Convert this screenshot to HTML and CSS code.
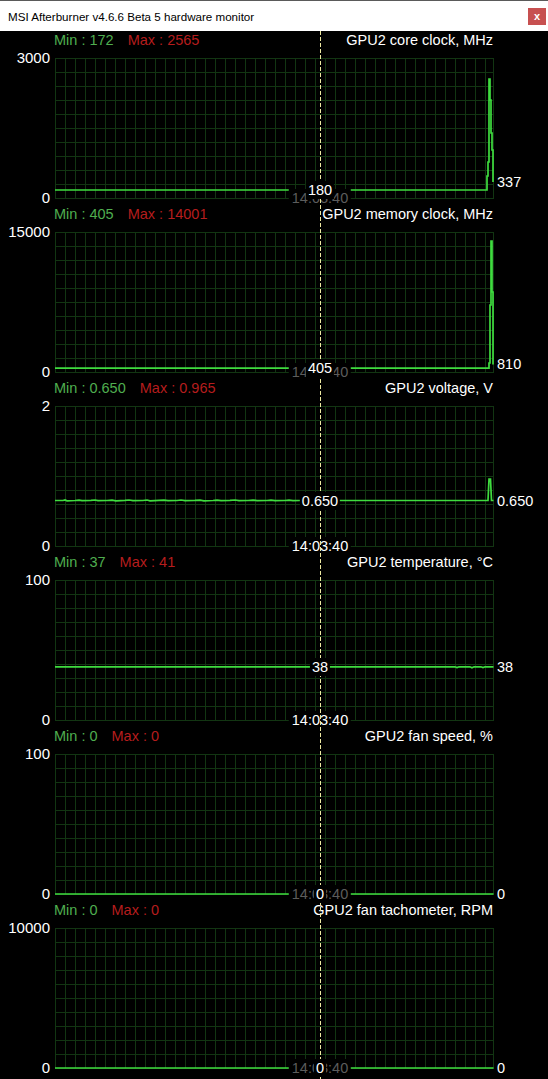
FILE: index.html
```html
<!DOCTYPE html>
<html>
<head>
<meta charset="utf-8">
<title>MSI Afterburner hardware monitor</title>
<link rel="stylesheet" href="styles.css">
</head>
<body>
<div class="window">
  <div class="titlebar">
    <span class="title">MSI Afterburner v4.6.6 Beta 5 hardware monitor</span>
    <span class="close">x</span>
  </div>
  <div class="monitor">
    <div class="cursor"></div>

    <section class="chart">
      <div class="head"><span class="min">Min : 172</span><span class="max">Max : 2565</span><span class="name">GPU2 core clock, MHz</span></div>
      <div class="body">
        <div class="axis"><span>3000</span><span>0</span></div>
        <div class="plot">
          <svg class="data" width="439" height="141" viewBox="0 0 439 141"><path d="M0,132 H432 V118 H433 V104 H434 V21 H435 V42 H436 V75 H437 V92 H438 V124"/></svg>
          <span class="time dim">14:03:40</span>
          <span class="val" style="top:122.6px">180</span>
          <span class="cur" style="top:115.3px">337</span>
        </div>
      </div>
    </section>

    <section class="chart">
      <div class="head"><span class="min">Min : 405</span><span class="max">Max : 14001</span><span class="name">GPU2 memory clock, MHz</span></div>
      <div class="body">
        <div class="axis"><span>15000</span><span>0</span></div>
        <div class="plot">
          <svg class="data" width="439" height="141" viewBox="0 0 439 141"><path d="M0,136.2 H434 V131 H435 V73 H436 V9 H437 V60 H438 V132.4"/></svg>
          <span class="time dim">14:03:40</span>
          <span class="val" style="top:127.2px">405</span>
          <span class="cur" style="top:123.4px">810</span>
        </div>
      </div>
    </section>

    <section class="chart">
      <div class="head"><span class="min">Min : 0.650</span><span class="max">Max : 0.965</span><span class="name">GPU2 voltage, V</span></div>
      <div class="body">
        <div class="axis"><span>2</span><span>0</span></div>
        <div class="plot">
          <svg class="data" width="439" height="141" viewBox="0 0 439 141"><path d="M0,94.5 L8,94.5 L10,94 L12,94.8 L20,94.5 L24,94.1 L27,94.6 L36,94.4 L40,94 L43,94.7 L52,94.5 L57,94.1 L61,94.8 L70,94.4 L74,94 L78,94.6 L88,94.5 L92,94 L95,94.8 L104,94.4 L109,94.1 L113,94.7 L122,94.5 L126,94 L130,94.6 L140,94.4 L145,94.1 L149,94.8 L158,94.5 L162,94.1 L166,94.6 L175,94.4 L180,94 L184,94.7 L193,94.5 L198,94.1 L202,94.6 L212,94.5 L216,94.1 L220,94.7 L230,94.5 L234,94.2 L238,94.6 L245,94.5 H433 L434,73 H435.5 L436.5,94.5 H438.5"/></svg>
          <span class="time">14:03:40</span>
          <span class="val" style="top:85.5px">0.650</span>
          <span class="cur" style="top:85.5px">0.650</span>
        </div>
      </div>
    </section>

    <section class="chart">
      <div class="head"><span class="min">Min : 37</span><span class="max">Max : 41</span><span class="name">GPU2 temperature, °C</span></div>
      <div class="body">
        <div class="axis"><span>100</span><span>0</span></div>
        <div class="plot">
          <svg class="data" width="439" height="141" viewBox="0 0 439 141"><path d="M0,86.8 H400 L402,87.6 L404,86.8 H415 L417,87.8 L419,86.8 H426 L428,87.5 L430,86.8 H438.5"/></svg>
          <span class="time">14:03:40</span>
          <span class="val" style="top:77.8px">38</span>
          <span class="cur" style="top:77.8px">38</span>
        </div>
      </div>
    </section>

    <section class="chart">
      <div class="head"><span class="min">Min : 0</span><span class="max">Max : 0</span><span class="name">GPU2 fan speed, %</span></div>
      <div class="body">
        <div class="axis"><span>100</span><span>0</span></div>
        <div class="plot">
          <svg class="data" width="439" height="141" viewBox="0 0 439 141"><path d="M0,140 H438.5"/></svg>
          <span class="time dim">14:03:40</span>
          <span class="val" style="top:131px">0</span>
          <span class="cur" style="top:131px">0</span>
        </div>
      </div>
    </section>

    <section class="chart">
      <div class="head"><span class="min">Min : 0</span><span class="max">Max : 0</span><span class="name">GPU2 fan tachometer, RPM</span></div>
      <div class="body">
        <div class="axis"><span>10000</span><span>0</span></div>
        <div class="plot">
          <svg class="data" width="439" height="141" viewBox="0 0 439 141"><path d="M0,140 H438.5"/></svg>
          <span class="time dim">14:03:40</span>
          <span class="val" style="top:131px">0</span>
          <span class="cur" style="top:131px">0</span>
        </div>
      </div>
    </section>
  </div>
</div>
</body>
</html>
```
FILE: styles.css
```css
* { box-sizing: border-box; }
html, body {
  margin: 0;
  padding: 0;
  background: #000;
}
body {
  font-family: "Liberation Sans", Arial, sans-serif;
  color: #fff;
  width: 548px;
  height: 1079px;
  overflow: hidden;
}
.titlebar {
  height: 31px;
  background: #fff;
  border-top: 1px solid #5a5a5a;
  display: flex;
  align-items: center;
  justify-content: space-between;
  padding: 0 2px 0 8px;
}
.title {
  font-size: 11.6px;
  color: #000;
}
.close {
  width: 18px;
  height: 17px;
  background: #c75050;
  color: #fff;
  font-size: 11px;
  font-weight: bold;
  line-height: 16px;
  text-align: center;
}
.monitor {
  position: relative;
}
.cursor {
  position: absolute;
  top: 0;
  bottom: -10px;
  left: 320px;
  width: 1px;
  background: repeating-linear-gradient(to bottom, #ece8a0 0 4px, transparent 4px 6px);
  z-index: 1;
}
.chart {
  height: 174px;
  display: flex;
  flex-direction: column;
}
.head {
  display: flex;
  height: 18px;
  line-height: 18px;
  font-size: 14.5px;
  padding: 0 55px 0 54px;
  white-space: nowrap;
}
.min { color: #4fae4f; }
.max { color: #b51d1d; margin-left: 14px; }
.name { margin-left: auto; color: #fff; }
.body {
  display: flex;
  margin-top: 9px;
  height: 141px;
}
.axis {
  width: 55px;
  padding-right: 5px;
  display: flex;
  flex-direction: column;
  justify-content: space-between;
  align-items: flex-end;
  font-size: 15px;
  line-height: 18px;
}
.axis span:first-child { margin-top: -9px; }
.axis span:last-child { margin-bottom: -8px; }
.plot {
  position: relative;
  width: 439px;
  height: 141px;
  background-image:
    linear-gradient(to right, #123512 1px, transparent 1px),
    linear-gradient(to bottom, #123512 1px, transparent 1px);
  background-size: 10px 14px;
  box-shadow: inset -1px 0 0 #123512;
}
.data {
  position: absolute;
  left: 0;
  top: 0;
  overflow: visible;
}
.data path {
  fill: none;
  stroke: #3fdc3f;
  stroke-width: 1.7;
}
.time, .val, .cur {
  position: absolute;
  font-size: 14.5px;
  line-height: 18px;
  white-space: nowrap;
}
.time {
  left: 265px;
  top: 131px;
  transform: translateX(-50%);
  background: #000;
  padding: 0 3px;
  color: #fff;
}
.time.dim { color: #5c5c5c; }
.val {
  left: 265px;
  transform: translateX(-50%);
  background: #000;
  padding: 0 2px;
  color: #fff;
  z-index: 2;
}
.cur {
  left: 442px;
  color: #fff;
}
```
